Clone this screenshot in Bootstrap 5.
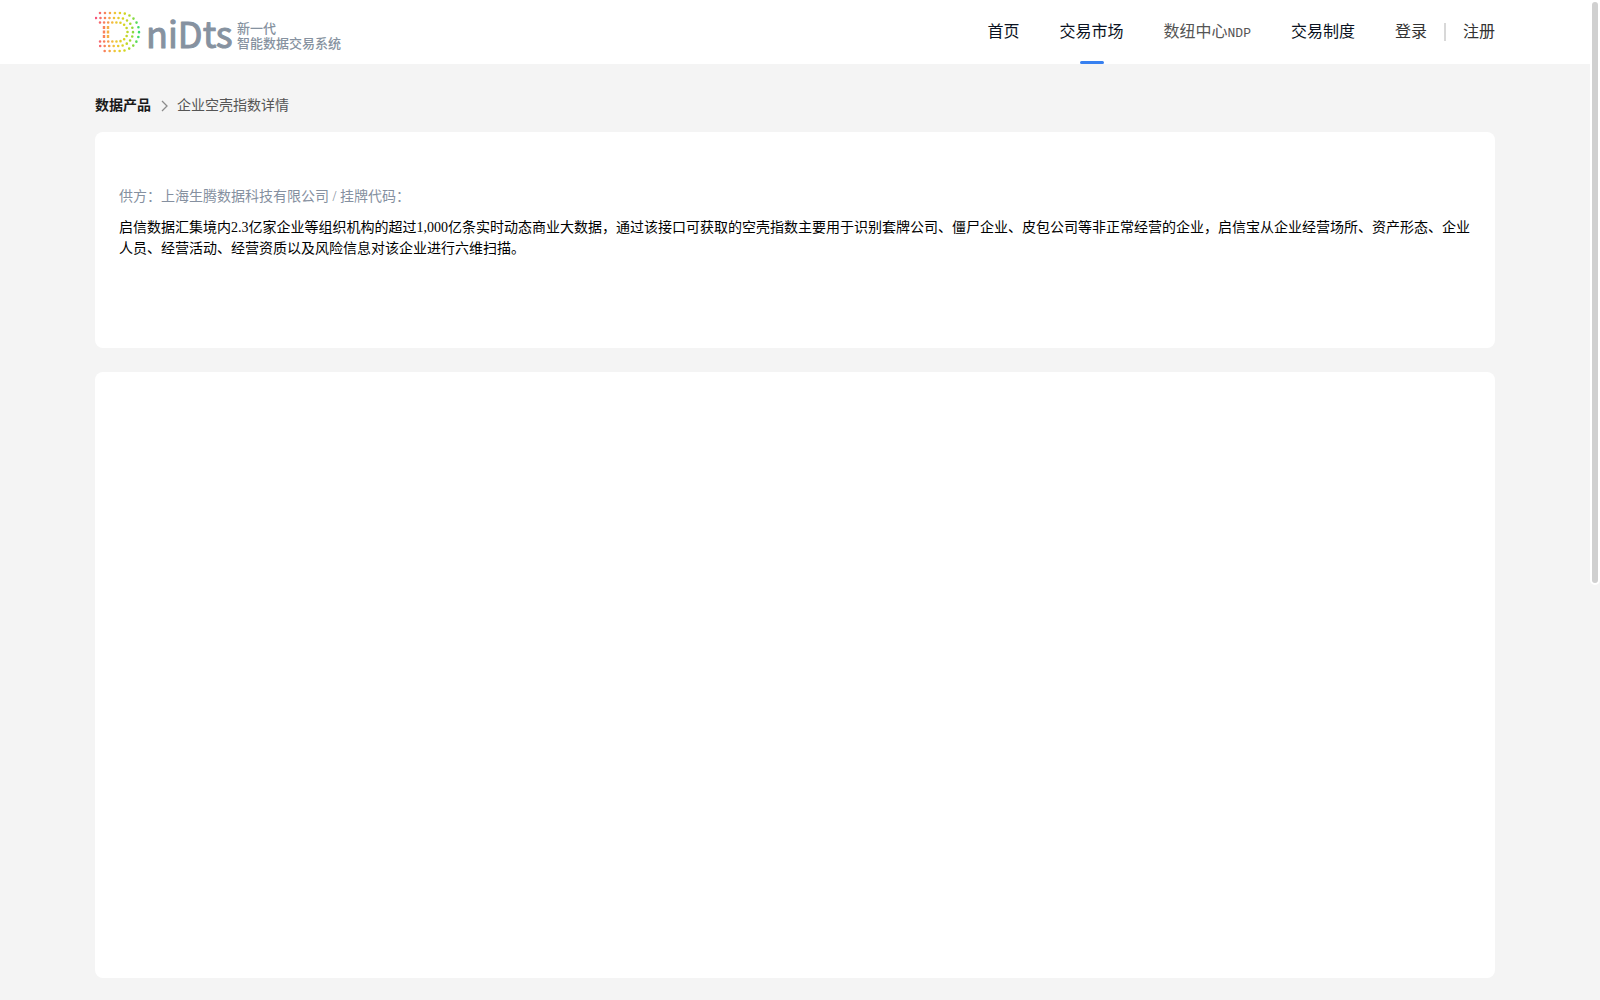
<!DOCTYPE html>
<html lang="zh-CN">
<head>
<meta charset="utf-8">
<meta name="viewport" content="width=device-width, initial-scale=1">
<title>企业空壳指数详情</title>
<link href="https://cdn.jsdelivr.net/npm/bootstrap@5.3.0/dist/css/bootstrap.min.css" rel="stylesheet">
<style>
  body {
    background: #f4f4f4;
    color: #000;
    font-family: "Liberation Serif", "Noto Sans CJK SC", sans-serif;
    font-size: 14px;
    line-height: 21px;
  }
  a { color: inherit; text-decoration: none; }
  .gutter { padding-right: 10px; }
  .shell { width: 100%; max-width: 1400px; margin: 0 auto; }
  .site-header { background: #fff; min-height: 64px; }
  .brand-text { color: #8692a0; font-family: "Noto Sans CJK SC", sans-serif; font-size: 13px; font-weight: 500; line-height: 15px; padding-top: 6px; }
  .main-menu { font-size: 16px; line-height: 64px; gap: 40px; color: #0a1222; }
  .main-menu .nav-link { padding: 0; color: inherit; white-space: nowrap; }
  .main-menu .menu-muted { color: #555; }
  .main-menu .menu-user { color: #333; }
  .latin { font-family: "Liberation Mono", monospace; font-size: 13px; line-height: 1; }
  .menu-active { position: relative; }
  .menu-active::after { content: ""; position: absolute; left: 50%; bottom: 0; width: 24px; height: 3px; margin-left: -12px; border-radius: 2px; background: #3780f0; }
  .menu-split { width: 2px; height: 18px; background: #d8d8d8; margin: 0 17px; }
  .crumbs { padding: 31px 0 16px; color: #555; }
  .crumbs strong { color: #1a1a1a; }
  .panel { background: #fff; border-radius: 8px; }
  .panel-intro { min-height: 216px; padding: 54px 24px 24px; }
  .panel-detail { min-height: 606px; }
  .supplier { color: #8590a0; margin-bottom: 10px; }
  .scroll-thumb { position: fixed; top: 0; right: 0; width: 10px; height: 585px; border: 2px solid #fff; border-radius: 5px; background: #d0d0d0; }
</style>
</head>
<body>
<header class="site-header gutter">
  <div class="shell d-flex justify-content-between align-items-center">
    <a href="#" class="d-flex align-items-center" aria-label="niDts">
      <svg width="142" height="64" viewBox="0 0 142 64" aria-hidden="true">
        <defs>
          <linearGradient id="hue" gradientUnits="userSpaceOnUse" x1="0" y1="0" x2="45" y2="0">
            <stop offset="0" stop-color="#f5517f"/><stop offset=".22" stop-color="#f98259"/><stop offset=".42" stop-color="#f2c43a"/>
            <stop offset=".65" stop-color="#d6d520"/><stop offset=".82" stop-color="#9bd936"/><stop offset="1" stop-color="#2bdc72"/>
          </linearGradient>
        </defs>
        <g fill="none" stroke="url(#hue)" stroke-width="2.6" stroke-linecap="round">
          <path d="M5 13H25A19 19 0 0 1 25 51H5" stroke-dasharray="0 4.98"/>
          <path d="M1 18H24A14 14 0 0 1 24 46H1" stroke-dasharray="0 4.5"/>
          <path d="M5 22.500H23A9.500 9.500 0 0 1 23 41.500H5" stroke-dasharray="0 4.100"/>
        </g>
        <path d="M9 26V38" stroke="#f98259" stroke-width="2.400" stroke-dasharray="3 1.500"/>
        <path d="M13 26V38" stroke="#f5b044" stroke-width="2.400" stroke-dasharray="3 1.500"/>
        <text x="51" y="48" font-family="'Noto Sans CJK SC',sans-serif" font-size="36" font-weight="400" fill="#8692a0" stroke="#8692a0" stroke-width="1" stroke-linejoin="round">niDts</text>
      </svg>
      <span class="brand-text">新一代<br>智能数据交易系统</span>
    </a>
    <nav class="main-menu d-flex align-items-center">
      <a class="nav-link" href="#">首页</a>
      <a class="nav-link menu-active" href="#" aria-current="page">交易市场</a>
      <a class="nav-link menu-muted" href="#">数纽中心<span class="latin">NDP</span></a>
      <a class="nav-link" href="#">交易制度</a>
      <div class="menu-user d-flex align-items-center">
        <a class="nav-link" href="#">登录</a>
        <span class="menu-split"></span>
        <a class="nav-link" href="#">注册</a>
      </div>
    </nav>
  </div>
</header>
<div class="gutter">
<main class="shell">
  <nav class="crumbs d-flex align-items-center" aria-label="breadcrumb">
    <a href="#"><strong>数据产品</strong></a>
    <svg class="mx-2" width="10" height="14" viewBox="0 0 10 14" fill="none" stroke="#8c8c8c" stroke-width="1.300" aria-hidden="true"><path d="M3 2l5 5-5 5"/></svg>
    <span>企业空壳指数详情</span>
  </nav>
  <section class="panel panel-intro mb-4">
    <p class="supplier">供方：上海生腾数据科技有限公司 / 挂牌代码：</p>
    <p class="mb-0">启信数据汇集境内2.3亿家企业等组织机构的超过1,000亿条实时动态商业大数据，通过该接口可获取的空壳指数主要用于识别套牌公司、僵尸企业、皮包公司等非正常经营的企业，启信宝从企业经营场所、资产形态、企业人员、经营活动、经营资质以及风险信息对该企业进行六维扫描。</p>
  </section>
  <section class="panel panel-detail"></section>
</main>
</div>
<div class="scroll-thumb" aria-hidden="true"></div>
<script src="https://cdn.jsdelivr.net/npm/bootstrap@5.3.0/dist/js/bootstrap.bundle.min.js"></script>
</body>
</html>
